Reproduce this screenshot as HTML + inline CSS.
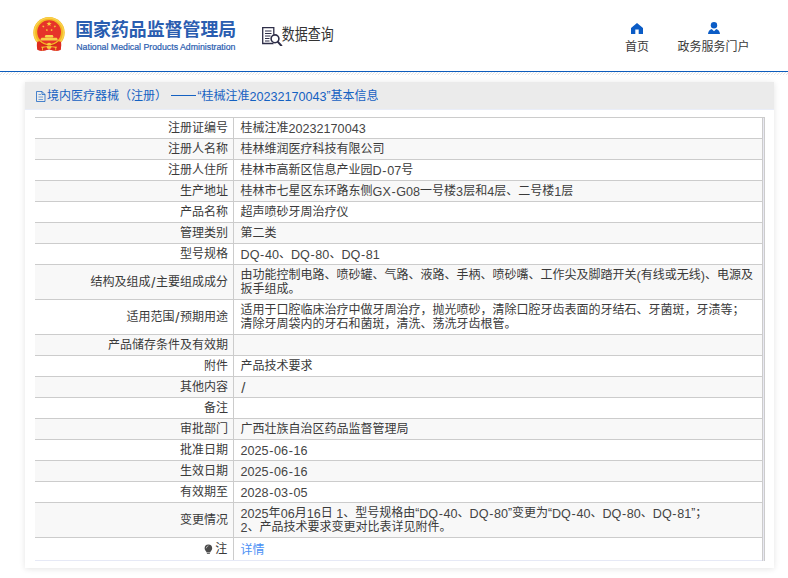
<!DOCTYPE html>
<html lang="zh-CN">
<head>
<meta charset="utf-8">
<title>国家药品监督管理局 数据查询</title>
<style>
html,body{margin:0;padding:0;background:#fff}
body{width:788px;height:578px;overflow:hidden;position:relative;font-family:"Liberation Sans","Noto Sans CJK SC",sans-serif;font-size:12px;line-height:14px;color:#3a3a3a}
span.k{font-family:"Liberation Sans","Noto Sans CJK SC",sans-serif;font-size:12px}
.abs{position:absolute}
#logo{left:32px;top:16px}
#title{left:75.200px;top:21px;color:#2a5db0;line-height:18px;white-space:nowrap}
#title span.kt{font-family:"Liberation Sans","Noto Sans CJK SC",sans-serif;font-size:17.9px;font-weight:bold;line-height:18px}
#sub{left:74px;top:41px;width:166px;height:13px}
#sub text{font-family:"Liberation Sans",sans-serif;font-size:9.600px;fill:#2a5db0;stroke:#2a5db0;stroke-width:.22px}
#query{left:261px;top:24px;height:24px;color:#333;white-space:nowrap}
#nav1{left:607px;top:22.700px;width:60px;text-align:center}
#nav2{left:673.600px;top:22px;width:80px;text-align:center}
#rule{left:0;top:71px;width:788px;height:1px;background:#0d5dbd}
#hatch{left:0;top:72px;width:788px;height:3px}
#panel{left:25px;top:82px;width:749px;height:486px;background:#fff;box-shadow:0 1px 6px rgba(0,0,0,.11)}
#phead{left:0;top:0;width:749px;height:27px;background:#ebebeb;border-bottom:1px solid #e9edf8;color:#1461c2;white-space:nowrap}
#phead .in{position:absolute;left:11px;top:6.700px;line-height:14px}
table{position:absolute;left:10px;top:35px;border-collapse:collapse;border-spacing:0;table-layout:fixed;width:730px}
td{padding:3px 5px 3px 6.600px;border-top:1px solid #ccc;vertical-align:middle;line-height:14px;white-space:nowrap}
td.l{width:186.400px;text-align:right;border-right:1px solid #ccc}
td.v{width:516.400px;text-align:left}
td.x{width:1px;padding:0;border-left:1px solid #ccc;border-right:1px solid #ccc;background:#e8e8f2}
tr.g td.l,tr.g td.v{background:#f8f8f8}
tr.last td{border-bottom:1px solid #e6e9f6;padding-top:5px;padding-bottom:3px}
tr.last td.l{padding-top:4px;padding-bottom:4px;padding-right:5.800px}
a.lnk{color:#4a90f5}
svg.bulb{display:inline-block;vertical-align:-1.500px;margin-right:2px}
.h{margin:0 .65px}
.dash{display:inline-block;width:25px;height:1px;background:currentColor;margin:0 1.900px 0 3.600px;vertical-align:4px}
span.kq{position:absolute;left:20.700px;top:3.200px;display:inline-block;font-family:"Liberation Sans","Noto Sans CJK SC",sans-serif;font-size:13px;line-height:13px;transform:scaleY(1.19);transform-origin:0 0}
.a{position:relative;top:1px;font-size:12.600px;line-height:0;color:#444}
#phead .a,a.lnk .a{color:inherit}
.s{margin:0 .65px;font-size:15px;position:relative;top:1px}
</style>
</head>
<body>
<div id="logo" class="abs"><svg width="34" height="36" viewBox="0 0 34 36" style="display:block"><path d="M5.200 25.500C4.600 28.500 4.800 31.500 5.600 33.800C8 34.900 11 35 13.500 34.300L17 32.800L20.500 34.300C23 35 26 34.900 28.400 33.800C29.200 31.500 29.400 28.500 28.800 25.500Z" fill="#d9291f"/><circle cx="17" cy="16.600" r="15.700" fill="#f4b624"/><circle cx="17" cy="16.600" r="14.600" fill="none" stroke="#f9d24a" stroke-width="1.600"/><circle cx="17.100" cy="16.100" r="11.900" fill="#e6342a"/><path d="M17.05 5.20L17.72 6.98L19.62 7.07L18.13 8.25L18.64 10.08L17.05 9.03L15.46 10.08L15.97 8.25L14.48 7.07L16.38 6.98ZM11.97 9.33L11.82 10.27L12.62 10.78L11.68 10.92L11.44 11.84L11.02 10.99L10.07 11.05L10.75 10.38L10.40 9.50L11.24 9.94ZM22.22 9.33L22.96 9.94L23.80 9.50L23.45 10.38L24.13 11.05L23.18 10.99L22.76 11.84L22.52 10.92L21.58 10.78L22.38 10.27ZM15.13 12.77L15.31 13.71L16.24 13.91L15.40 14.37L15.49 15.31L14.80 14.66L13.93 15.04L14.34 14.18L13.71 13.47L14.65 13.59ZM19.27 12.77L19.75 13.59L20.69 13.47L20.06 14.18L20.47 15.04L19.60 14.66L18.91 15.31L19.00 14.37L18.16 13.91L19.09 13.71Z" fill="#f8d43a"/><path d="M12.700 20.900L13.500 19H20.700L21.500 20.900Z" fill="#f8d84e"/><path d="M13.300 20.900H20.900V21.700H13.300Z" fill="#f3c23a"/><path d="M8.600 23.100L9.600 21.700H24.600L25.600 23.100V24.500H8.600Z" fill="#f7d048"/><path d="M5.200 25.800L7.500 25.300A13.300 13.300 0 0 0 26.700 25.300L29 25.800C29.300 28.500 29.200 31.500 28.600 34C26 35 22.500 34.900 20.300 34.300L17.100 33.600L13.900 34.300C11.700 34.900 8.200 35 5.600 34C5 31.500 4.900 28.500 5.200 25.800Z" fill="#de2b1f"/><path d="M7.500 25.300A13.300 13.300 0 0 0 26.700 25.300L25.500 27.600A12 12 0 0 1 8.700 27.600Z" fill="#c9241a" opacity=".55"/><ellipse cx="17.100" cy="28.300" rx="2.100" ry="1.500" fill="#f8cf3c"/><circle cx="17.100" cy="29.700" r=".55" fill="#de2b1f"/><path d="M10.300 31.400C12.500 30.900 14.500 30.600 17.100 30.300C19.700 30.600 21.700 30.900 23.900 31.400" fill="none" stroke="#f5c535" stroke-width=".9"/><ellipse cx="17.100" cy="31.600" rx="2.400" ry="1.300" fill="#f8cf3c"/><path d="M9 30.800L11.800 30.800L10.900 32.300V34.500H10V32.300Z M22.400 30.800L25.200 30.800L24.200 32.300V34.500H23.300V32.300Z" fill="#f5c535"/></svg></div>
<div id="title" class="abs"><span class="kt">国家药品监督管理局</span></div>
<svg id="sub" class="abs" width="166" height="13" viewBox="0 0 166 13"><text x="2.300" y="9.450" textLength="159.200" lengthAdjust="spacingAndGlyphs">National Medical Products Administration</text></svg>
<div id="query" class="abs"><svg class="qi" width="22" height="22" viewBox="0 0 22 22" style="vertical-align:top"><g fill="none" stroke="#2e2e48" stroke-width="1.3"><path d="M12.500 19.500H1.700V3.700H12.800V10.500"/><path d="M4 7H10.500M4 9.500H10.500M4 12H9.500M4 14.500H8.500M4 17H8.500" stroke-width="1"/><circle cx="14" cy="14.800" r="3.900" fill="#fff" stroke-width="1.600"/><path d="M16.900 17.900L20.300 21.700" stroke-width="2" stroke-linecap="round"/></g></svg><span class="kq">数据查询</span></div>
<div id="nav1" class="abs"><svg width="12" height="11" viewBox="0 0 12 11" style="display:block;margin:0 auto"><path d="M6 0L12 5V11H7.700V6.600H4.300V11H0V5Z" fill="#0b5cc6"/></svg><div style="margin-top:6.500px"><span class="k">首页</span></div></div>
<div id="nav2" class="abs"><svg width="12" height="12" viewBox="0 0 12 12" style="display:block;margin:0 auto"><circle cx="6" cy="3.200" r="3.200" fill="#0b5cc6"/><path d="M0 12C.2 9.500 1.500 7.700 3.700 7L6 9.300L8.300 7C10.500 7.700 11.800 9.500 12 12Z" fill="#0b5cc6"/></svg><div style="margin-top:6px"><span class="k">政务服务门户</span></div></div>
<div id="rule" class="abs"></div>
<svg id="hatch" class="abs" width="788" height="3" viewBox="0 0 788 3"><defs><pattern id="ht" width="3" height="3" patternUnits="userSpaceOnUse"><path d="M2 0h1v1h-1zM1 1h1v1h-1zM0 2h1v1h-1z" fill="#e6e6e6"/></pattern></defs><rect width="788" height="3" fill="url(#ht)"/></svg>
<div id="panel" class="abs">
<div id="phead" class="abs"><div class="in"><svg class="doc" width="10" height="11" viewBox="0 0 10 11" style="display:inline-block;vertical-align:-2.300px;margin-right:1px"><path d="M.5.500H6L9 3.500V10.500H.5Z M6 .5V3.500H9" fill="none" stroke="currentColor" stroke-width=".9" opacity=".85"/><path d="M2.500 3.500H5M2.500 6H7M2.500 8.500H7" stroke="currentColor" stroke-width=".9" opacity=".6"/></svg><span class="k">境内医疗器械（注册）</span><span class="dash"></span><span class="k">“桂械注准</span><span class="a">20232170043</span><span class="k">”基本信息</span></div></div>
<table>
<tr><td class="l"><span class="k">注册证编号</span></td><td class="v"><span class="k">桂械注准</span><span class="a">20232170043</span></td><td class="x" rowspan="19"></td></tr>
<tr class="g"><td class="l"><span class="k">注册人名称</span></td><td class="v"><span class="k">桂林维润医疗科技有限公司</span></td></tr>
<tr><td class="l"><span class="k">注册人住所</span></td><td class="v"><span class="k">桂林市高新区信息产业园</span><span class="a">D<span class="h">-</span>07</span><span class="k">号</span></td></tr>
<tr class="g"><td class="l"><span class="k">生产地址</span></td><td class="v"><span class="k">桂林市七星区东环路东侧</span><span class="a">GX<span class="h">-</span>G08</span><span class="k">一号楼</span><span class="a">3</span><span class="k">层和</span><span class="a">4</span><span class="k">层、二号楼</span><span class="a">1</span><span class="k">层</span></td></tr>
<tr><td class="l"><span class="k">产品名称</span></td><td class="v"><span class="k">超声喷砂牙周治疗仪</span></td></tr>
<tr class="g"><td class="l"><span class="k">管理类别</span></td><td class="v"><span class="k">第二类</span></td></tr>
<tr><td class="l"><span class="k">型号规格</span></td><td class="v"><span class="a">DQ<span class="h">-</span>40</span><span class="k">、</span><span class="a">DQ<span class="h">-</span>80</span><span class="k">、</span><span class="a">DQ<span class="h">-</span>81</span></td></tr>
<tr class="g"><td class="l"><span class="k">结构及组成</span><span class="a"><span class="s">/</span></span><span class="k">主要组成成分</span></td><td class="v"><span class="k">由功能控制电路、喷砂罐、气路、液路、手柄、喷砂嘴、工作尖及脚踏开关</span><span class="a">(</span><span class="k">有线或无线</span><span class="a">)</span><span class="k">、电源及</span><br><span class="k">扳手组成。</span></td></tr>
<tr><td class="l"><span class="k">适用范围</span><span class="a"><span class="s">/</span></span><span class="k">预期用途</span></td><td class="v"><span class="k">适用于口腔临床治疗中做牙周治疗，抛光喷砂，清除口腔牙齿表面的牙结石、牙菌斑，牙渍等；</span><br><span class="k">清除牙周袋内的牙石和菌斑，清洗、荡洗牙齿根管。</span></td></tr>
<tr class="g"><td class="l"><span class="k">产品储存条件及有效期</span></td><td class="v"></td></tr>
<tr><td class="l"><span class="k">附件</span></td><td class="v"><span class="k">产品技术要求</span></td></tr>
<tr class="g"><td class="l"><span class="k">其他内容</span></td><td class="v"><span class="a"><span class="s">/</span></span></td></tr>
<tr><td class="l"><span class="k">备注</span></td><td class="v"></td></tr>
<tr class="g"><td class="l"><span class="k">审批部门</span></td><td class="v"><span class="k">广西壮族自治区药品监督管理局</span></td></tr>
<tr><td class="l"><span class="k">批准日期</span></td><td class="v"><span class="a">2025<span class="h">-</span>06<span class="h">-</span>16</span></td></tr>
<tr class="g"><td class="l"><span class="k">生效日期</span></td><td class="v"><span class="a">2025<span class="h">-</span>06<span class="h">-</span>16</span></td></tr>
<tr><td class="l"><span class="k">有效期至</span></td><td class="v"><span class="a">2028<span class="h">-</span>03<span class="h">-</span>05</span></td></tr>
<tr class="g"><td class="l"><span class="k">变更情况</span></td><td class="v"><span class="a">2025</span><span class="k">年</span><span class="a">06</span><span class="k">月</span><span class="a">16</span><span class="k">日</span><span class="a"> 1</span><span class="k">、型号规格由“</span><span class="a">DQ<span class="h">-</span>40</span><span class="k">、</span><span class="a">DQ<span class="h">-</span>80</span><span class="k">”变更为“</span><span class="a">DQ<span class="h">-</span>40</span><span class="k">、</span><span class="a">DQ<span class="h">-</span>80</span><span class="k">、</span><span class="a">DQ<span class="h">-</span>81</span><span class="k">”；</span><br><span class="a">2</span><span class="k">、产品技术要求变更对比表详见附件。</span></td></tr>
<tr class="last"><td class="l"><svg class="bulb" width="8.800" height="10.600" viewBox="0 0 10 12"><path d="M5 .6a4.3 4.3 0 0 1 4.3 4.3c0 1.700-.9 2.700-1.700 3.500-.4.4-.5.8-.5 1.200H2.900c0-.4-.1-.8-.5-1.200C1.600 7.600.7 6.600.7 4.900A4.300 4.300 0 0 1 5 .6z" fill="#4a4a4a"/><path d="M2.600 4.400a2.600 2.600 0 0 1 2-2.300" fill="none" stroke="#d8d8d8" stroke-width=".8" stroke-linecap="round"/><rect x="3.200" y="10.300" width="3.600" height="1.100" rx=".4" fill="#6a6a6a"/></svg><span class="k">注</span></td><td class="v"><a class="lnk"><span class="k">详情</span></a></td></tr>
</table>
</div>

</body>
</html>
